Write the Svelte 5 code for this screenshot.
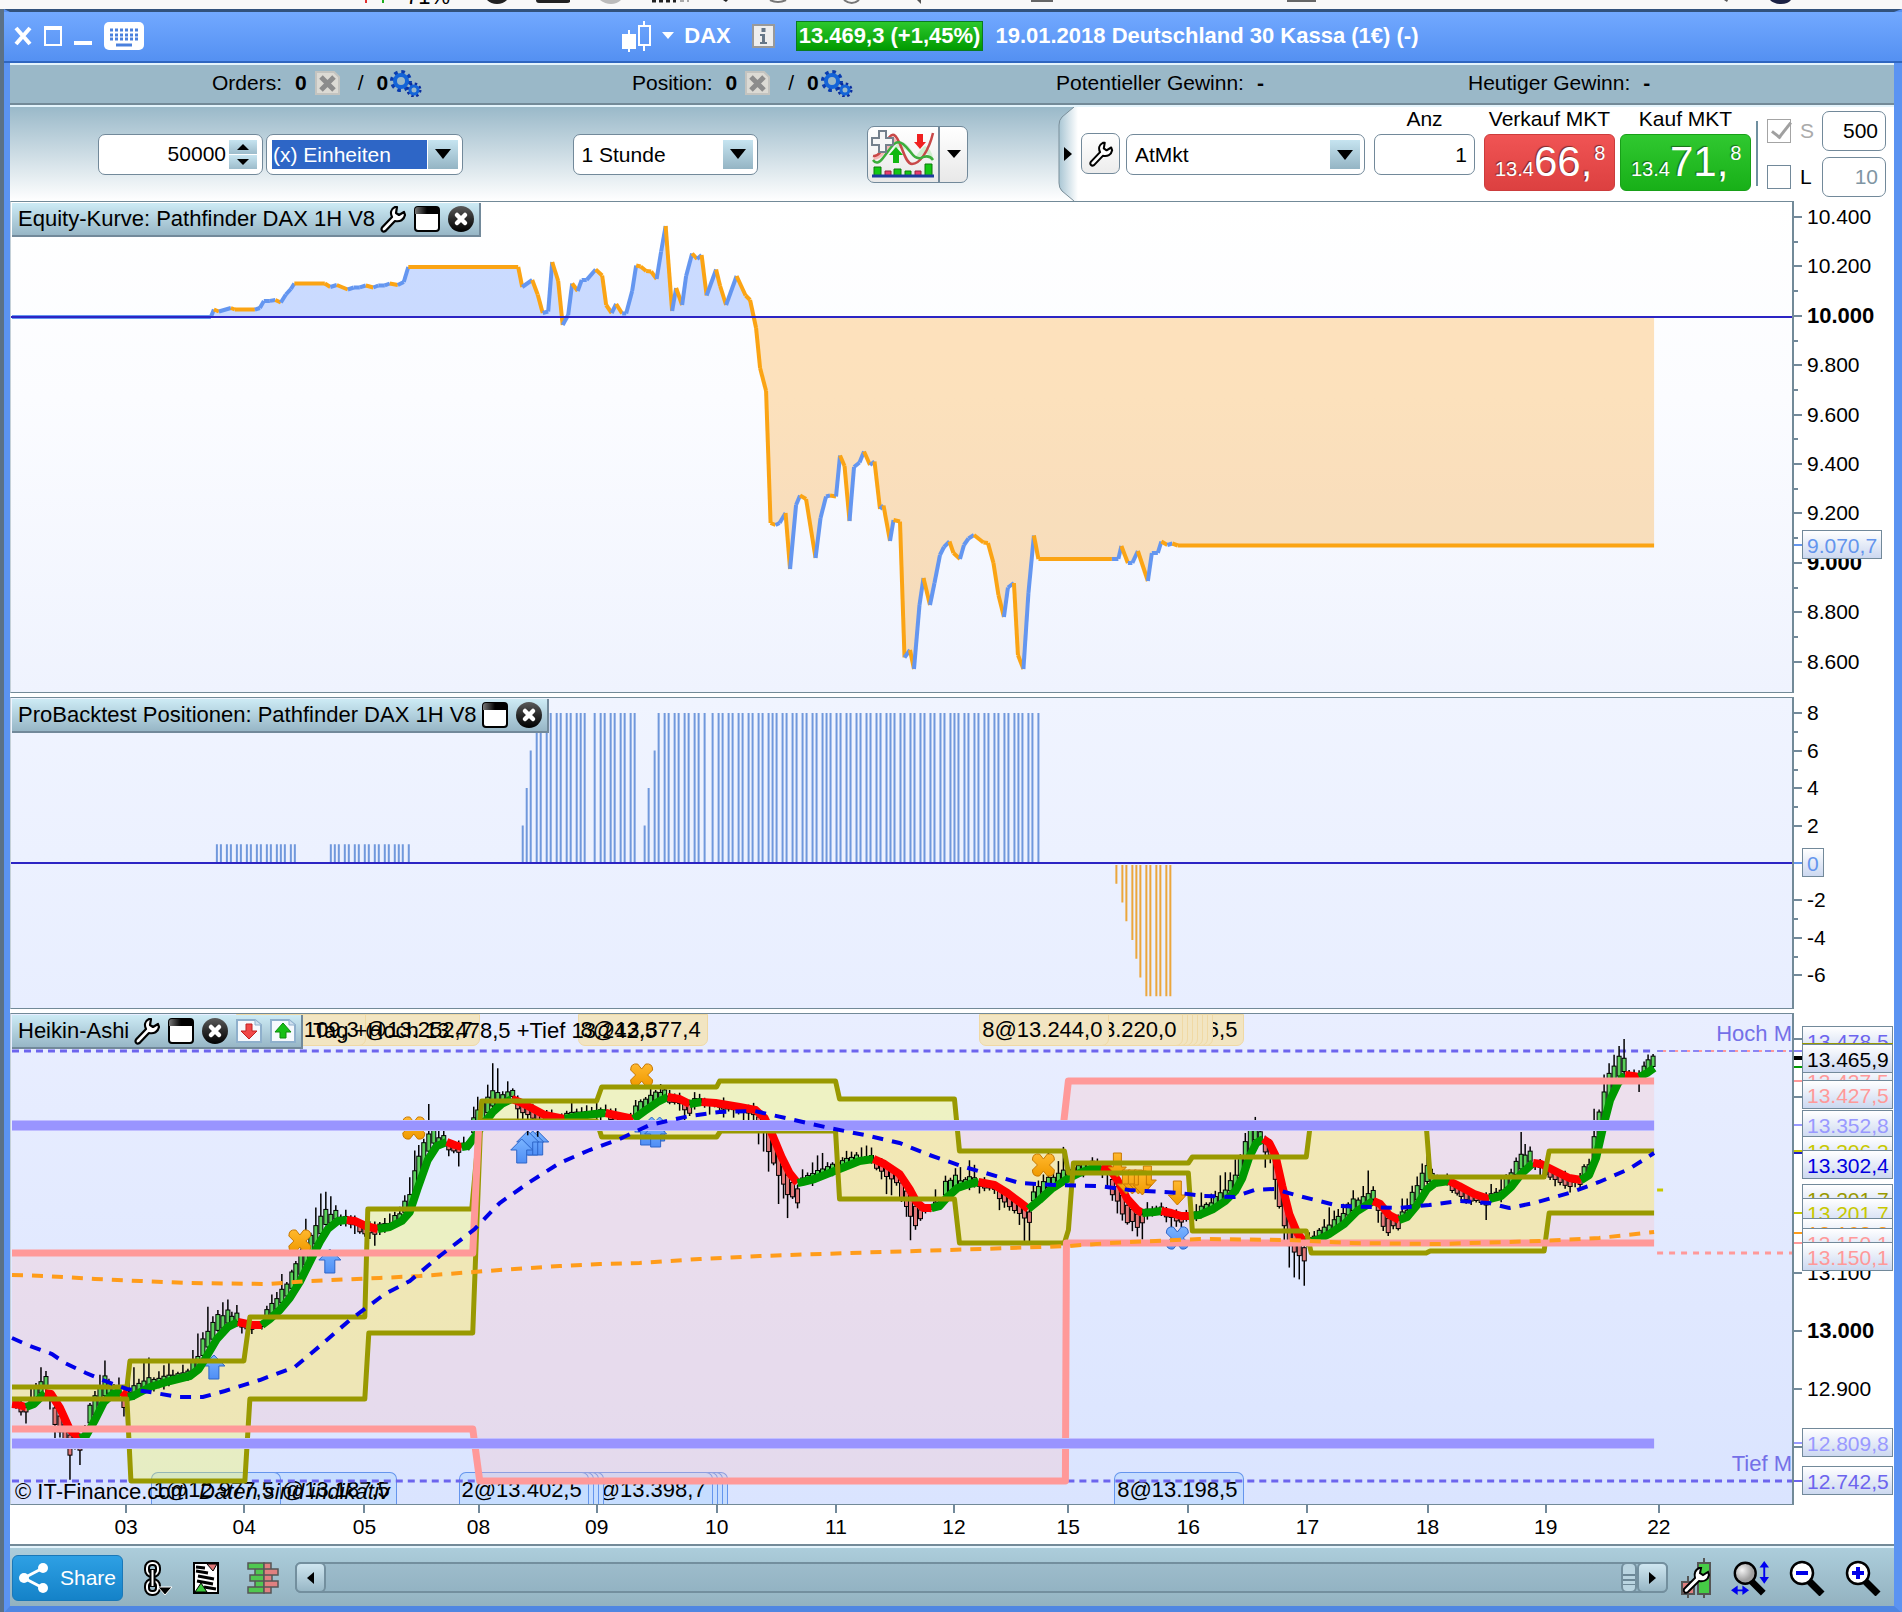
<script>
  // Einstellungen der Werkzeugleiste
  let units = $state(50000);
  let unitMode = $state('(x) Einheiten');
  let timeframe = $state('1 Stunde');
  let orderType = $state('AtMkt');
  let amount = $state(1);
  let stopOn = $state(true);
  let limitOn = $state(false);
  let stop = $state(500);
  let limit = $state(10);

  // Zeichenfläche: alle Kurven liegen im selben Koordinatensystem
  const X0 = 11;
  const W = 1782;
  const equityTop = 202;
  const positionTop = 698;
  const priceTop = 1014;

  const left = (x) => ((x - X0) / W) * 100 + '%';
  const pts = (list) => list.map((p) => p.join(',')).join(' ');

  // Kapitalkurve
  const equity = [
    [12,317],[211,317],[214,309.5],[219,311.5],[231,308],[235,309.5],[255,309.6],[260,308],[264,301],[270,300.9],
    [275.5,300],[281,302.5],[286,294.5],[291,289],[294.5,283.5],[325,283.5],[330.5,287],[337,285],[348,289.5],
    [354,287.5],[360,287.4],[366,285.5],[373.5,287.5],[378.5,285.5],[385,285.4],[390,283.5],[398,285],[404,282],
    [408.5,267],[518.5,267],[522.5,287],[532.5,280],[538,294.5],[543,313],[548.5,311.5],[552.5,262],[558.5,281],
    [563,325],[568.5,315],[572.5,283.5],[578,291],[582,280],[587,279.9],[596,269.5],[602.5,275.5],[606.5,305],
    [612,313],[616.5,304],[622.5,313.5],[626.5,313.4],[632.5,291],[636.5,265.5],[641,266.5],[646.5,271],
    [651.5,271.5],[657,279],[661.5,251.5],[666,226],[672.5,311],[676.5,288],[682.5,305],[686.5,276],[692.5,253.5],
    [697.5,259],[702,255],[707,295.5],[716.5,269.5],[720.5,286],[726.5,305],[737,276],[746,295.5],[750.5,300],
    [756.5,328],[760.5,368],[766.5,391],[771,523],[776,525],[780,523],[786,513],[790.5,569],[796.5,505],
    [800.5,495.5],[806.5,499],[816,558],[821,518],[826.5,496.5],[830.5,495.5],[836.5,496.5],[840.5,455.5],
    [845,466],[850,521],[854.5,467],[860,462.5],[864.5,451.5],[870.5,465],[875,461.5],[880.5,509],[884,505.5],
    [890.5,541],[894,520],[900.5,521.5],[905,657.5],[910.5,650],[914.5,669],[920,605],[924,578],[930.5,605],
    [935,583],[940.5,555],[944.5,547],[950,541.5],[954,553],[960.5,559],[964.5,545],[969,538.5],[974.5,535],
    [984,542.5],[988.5,543],[994,563],[999,595],[1004.5,617],[1008.5,587.5],[1014.5,583],[1018.5,655],
    [1024,669],[1029,593],[1034.5,535.5],[1039,559],[1112.5,559],[1119,558.9],[1122,546],[1128.5,563],
    [1133,562.9],[1138.5,551],[1148.5,581],[1152.5,553],[1158.5,552.9],[1162,541.5],[1168,545],[1173,543.5],
    [1178.5,545.5],[1655,545.5]
  ];
  const equityArea = pts([...equity, [1655, 317], [12, 317]]);
  const equityLines = equity.slice(1).map((p, i) => ({
    points: pts([equity[i], p]),
    up: i === 0 || p[1] < equity[i][1]
  }));

  // Positionsgröße pro Kerze
  const bars = [];
  const addBars = (from, to, size) => {
    for (let i = from; i <= to; i++) {
      if ([14, 24, 38].includes(i)) continue;
      bars.push({ x: Math.round((521 + 4.92 * i) / 2) * 2, v: size(i) });
    }
  };
  addBars(-62, -46, () => 1);
  addBars(-39, -23, () => 1);
  addBars(0, 23, (i) => Math.min(8, 2 + 2 * i));
  addBars(25, 105, (i) => Math.min(8, 2 + 2 * (i - 25)));
  addBars(121, 132, (i) => -Math.min(7, i - 120));

  // Geglätteter Kurs, steigend grün und fallend rot
  const trend = [
    [12,1404],[17,1404.5],[26,1407],[34,1404],[45,1393],[51,1394],[60,1408],[70,1430],[80,1438],[86,1436],[95,1420],
    [104,1402],[113,1394],[122,1392],[128,1397],[133,1396],[150,1387],[170,1381],[190,1376],[199,1369],[207,1356],
    [217,1339],[228,1327],[238,1322],[243,1323],[252,1325],[262,1325],[270,1319],[280,1310],[290,1298],[300,1282],
    [312,1258],[320,1242],[328,1229],[338,1221],[347,1220],[355,1221],[366,1226],[378,1229],[390,1227],[402,1221],
    [410,1212],[418,1188],[428,1160],[437,1146],[447,1142],[455,1145],[462,1147],[468,1146],[474,1138],[484,1124],
    [493,1112],[502,1104],[512,1099],[520,1102],[530,1107],[545,1115],[565,1119],[580,1116],[595,1114],[606,1113],
    [615,1115],[634,1119],[645,1111],[658,1102],[668,1097],[680,1099],[690,1104],[696,1103],[702,1102],[716,1103],
    [740,1107],[756,1110],[765,1118],[772,1133],[782,1157],[790,1173],[798,1183],[803,1182],[815,1179],[830,1173],
    [845,1167],[860,1161],[874,1159],[885,1164],[900,1174],[910,1189],[917,1202],[924,1208],[932,1208],[940,1206],
    [948,1197],[958,1188],[970,1184],[979,1182],[995,1185],[1008,1193],[1020,1202],[1029,1209],[1040,1200],
    [1052,1189],[1066,1180],[1080,1173],[1094,1168],[1102,1167],[1110,1169],[1118,1180],[1128,1199],[1138,1210],
    [1143,1213],[1155,1212],[1162,1211],[1172,1213],[1182,1216],[1190,1216],[1200,1215],[1214,1209],[1226,1201],
    [1236,1191],[1243,1178],[1250,1157],[1257,1143],[1264,1139],[1270,1143],[1276,1155],[1283,1186],[1290,1214],
    [1298,1233],[1306,1243],[1318,1240],[1330,1234],[1345,1224],[1358,1211],[1374,1201],[1381,1204],[1390,1215],
    [1400,1220],[1408,1217],[1418,1205],[1428,1189],[1436,1183],[1450,1181],[1460,1186],[1475,1194],[1490,1199],
    [1502,1196],[1512,1187],[1522,1174],[1534,1163],[1542,1164],[1556,1171],[1570,1178],[1582,1180],[1590,1175],
    [1597,1158],[1604,1127],[1611,1100],[1619,1083],[1626,1075],[1634,1076],[1640,1077],[1648,1073],[1655,1068]
  ];
  const trendLines = [];
  trend.slice(1).forEach((p, i) => {
    const up = p[1] < trend[i][1];
    const last = trendLines.at(-1);
    if (last && last.up === up) last.list.push(p);
    else trendLines.push({ up, list: [trend[i], p] });
  });

  const trendAt = (x) => {
    const i = Math.max(1, trend.findIndex((p) => p[0] >= x));
    const [a, b] = [trend[i - 1], trend[i]];
    return { y: a[1] + ((x - a[0]) / (b[0] - a[0])) * (b[1] - a[1]), k: (b[1] - a[1]) / (b[0] - a[0]) };
  };

  // Heikin-Ashi-Kerzen laufen dem geglätteten Kurs voraus
  const candles = [];
  for (let i = 0; i < 334; i++) {
    const x = 15 + i * 4.92;
    const { y, k } = trendAt(x);
    const r1 = Math.abs(Math.sin(i * 12.9898) * 43758.5453) % 1;
    const r2 = Math.abs(Math.sin(i * 78.233) * 12543.123) % 1;
    const lead = Math.max(-17, Math.min(17, k * 11));
    const body = 2 + Math.abs(k) * 8 + r1 * 3;
    const mid = y + lead;
    const up = k < 0;
    const wick = 2 + r2 * r2 * (6 + Math.min(22, Math.abs(k) * 26));
    candles.push({
      x: Math.round(x),
      top: mid - body / 2,
      body,
      high: mid - body / 2 - (up ? wick : 1 + r1 * 5),
      low: mid + body / 2 + (up ? 1 + r1 * 5 : wick),
      up
    });
  }

  // Tageshoch und Tagestief, Wochenhoch und Wochentief
  const dayHigh = [
    [12,1387],[127,1387],[130,1361],[244,1361],[250,1317],[365,1317],[368,1209],[472,1209],[482,1101],[597,1101],
    [602,1087],[717,1087],[720,1081],[836,1081],[840,1099],[955,1099],[960,1151],[1065,1151],[1069,1173],[1189,1173],
    [1193,1231],[1307,1231],[1312,1253],[1427,1253],[1431,1251],[1545,1251],[1550,1213],[1655,1213]
  ];
  const dayLow = [
    [12,1399],[127,1399],[131,1481],[245,1481],[250,1399],[365,1399],[369,1333],[473,1333],[481,1121],[597,1121],
    [602,1137],[717,1137],[721,1131],[836,1131],[840,1199],[955,1199],[960,1243],[1065,1243],[1069,1230],[1074,1163],
    [1189,1163],[1193,1157],[1307,1157],[1311,1125],[1427,1125],[1431,1177],[1545,1177],[1550,1151],[1655,1151]
  ];
  const weekHigh = [[12,1253],[473,1253],[479,1125],[1064,1125],[1069,1081],[1655,1081]];
  const weekLow = [[12,1429],[473,1429],[480,1481],[1066,1481],[1067,1243],[1655,1243]];
  const dayArea = pts([...dayHigh, ...dayLow.slice().reverse()]);
  const weekArea = pts([...weekHigh, ...weekLow.slice().reverse()]);

  const averageBlue = pts([
    [12,1338],[30,1346],[52,1354],[65,1363],[86,1373],[105,1381],[127,1389],[150,1392],[178,1397],[203,1397],
    [225,1391],[260,1380],[295,1367],[320,1346],[350,1320],[385,1294],[410,1281],[440,1256],[475,1229],[500,1203],
    [530,1182],[560,1163],[590,1150],[620,1139],[650,1125],[690,1116],[720,1112],[755,1111],[790,1119],[830,1128],
    [870,1136],[900,1143],[930,1155],[965,1167],[1000,1177],[1020,1183],[1055,1185],[1100,1186],[1130,1190],
    [1180,1193],[1205,1196],[1235,1197],[1255,1190],[1275,1189],[1300,1196],[1340,1206],[1400,1208],[1430,1205],
    [1460,1201],[1490,1203],[1510,1208],[1535,1203],[1570,1193],[1600,1182],[1630,1169],[1655,1153]
  ]);
  const averageOrange = pts([
    [12,1275],[45,1276],[95,1279],[140,1281],[190,1283],[270,1284],[310,1281],[380,1278],[420,1276],[500,1270],
    [560,1266],[600,1264],[640,1263],[700,1259],[760,1256],[850,1253],[950,1250],[1010,1248],[1070,1246],
    [1110,1243],[1200,1239],[1290,1240],[1350,1243],[1440,1244],[1540,1241],[1600,1238],[1655,1232]
  ]);

  const exits = [[300,1241],[414,1128],[642,1075],[1044,1165]];
  const buys = [[214,1367],[330,1261],[538,1143],[533,1143],[528,1143],[522,1151],[660,1129],[652,1129],[646,1133],[656,1135]];
  const sells = [[1118,1165],[1148,1178],[1127,1182],[1133,1182],[1139,1182],[1143,1183],[1178,1193]];

  // Order-Etiketten, die linken überdecken die rechten
  const topChips = [
    [1115,'6,5'],[1084,''],[1079,''],[1074,''],[1069,''],[1064,''],[1059,''],
    [1054,'3.220,0'],[980,'8@13.244,0'],[578,'8@13.377,4'],[350,'@13.252,7'],[236,'109,3']
  ];
  const bottomChips = [
    [1115,'8@13.198,5'],[598,''],[593,''],[588,''],[583,'@13.398,7'],[474,''],
    [469,''],[464,''],[459,'2@13.402,5'],[267,'@13.187,5'],[151,'1@12.977,5']
  ];

  // Achsen
  const equityScale = [10400, 10200, 10000, 9800, 9600, 9400, 9200, 9000, 8800, 8600].map((v) => ({
    text: v.toLocaleString('de-DE').replace(/^(\d)(\d{3})$/, '$1.$2'),
    y: 217 + (10400 - v) * 0.247 - equityTop,
    bold: v % 1000 === 0
  }));
  const positionScale = [8, 6, 4, 2, -2, -4, -6].map((v) => ({ text: v, y: 863 - v * 18.7 - positionTop }));
  const priceScale = [
    { text: '', y: 25 }, { text: '', y: 83 }, { text: '13.100', y: 259 },
    { text: '13.000', y: 317, bold: true }, { text: '12.900', y: 375 }, { text: '', y: 433 }
  ];
  const priceTags = [
    ['13.478,5', 1027, '#6c64ee'], ['', 1044, '#999900'], ['13.427,5', 1067, '#ff9999'], ['13.427,5', 1081, '#ff9999'],
    ['13.465,9', 1045, '#000000'], ['13.352,8', 1111, '#9999ff'], ['13.306,3', 1137, '#c8c800'], ['13.302,4', 1151, '#0000e0'],
    ['13.201,7', 1185, '#999900'], ['13.201,7', 1199, '#c8c800'], ['13.168,3', 1219, '#ff9c1a'], ['13.150,1', 1229, '#ff9999'],
    ['13.150,1', 1243, '#ff9999'], ['12.809,8', 1429, '#9999ff'], ['12.742,5', 1467, '#6c64ee']
  ];
  const priceMarks = [
    [1051, '#8a84f4'], [1057, '#000000'], [1059, '#000000'], [1067, '#009900'], [1081, '#ff9999'], [1125, '#9999ff'],
    [1151, '#c8c800'], [1153, '#2020c0'], [1213, '#c8c800'], [1233, '#ff9c1a'], [1243, '#ff9999'], [1443, '#9999ff'], [1481, '#6c64ee']
  ];
  const days = [
    ['03', 127], ['04', 245], ['05', 365], ['08', 479], ['09', 597], ['10', 717], ['11', 836], ['12', 954],
    ['15', 1068], ['16', 1188], ['17', 1307], ['18', 1427], ['19', 1545], ['22', 1658]
  ];
</script>

{#snippet wrench(w = 26, h = 28)}
  <svg width={w} height={h} viewBox="0 0 26 28" aria-hidden="true">
    <path d="M15 2C11 4 10 8 12 12L2 22.500c-1.500 3 1 5 3.500 3.500L15 16c5 1 9-1 10-6l-1-3-5 3-3-2 1-6z" fill="#fff" stroke="#000" stroke-width="2.200" stroke-linejoin="round" />
  </svg>
{/snippet}

{#snippet closeIcon()}
  <svg width="26" height="26" viewBox="0 0 26 26" aria-hidden="true">
    <circle cx="13" cy="13" r="13" fill="url(#ball)" />
    <path d="M9 9l8 8M17 9l-8 8" stroke="#fff" stroke-width="4.500" stroke-linecap="round" />
  </svg>
{/snippet}

{#snippet windowIcon()}
  <svg width="26" height="26" viewBox="0 0 26 26" aria-hidden="true">
    <rect x="1" y="1" width="24" height="24" rx="3" fill="#fff" stroke="#000" stroke-width="2" />
    <path d="M1 8V4q0-3 3-3h18q3 0 3 3v4z" fill="url(#cap)" />
  </svg>
{/snippet}

{#snippet docArrow(up)}
  <svg width="26" height="24" viewBox="0 0 26 24" aria-hidden="true">
    <path d="M1 1h18l6 5v17H1z" fill="#f6f9fd" stroke="#8fb0cc" stroke-width="2" />
    <path d="M19 1v5h6" fill="#cfe0ef" stroke="#8fb0cc" />
    {#if up}
      <path d="M13 4l8 9h-5v6h-6v-6H5z" fill="#16c016" stroke="#0a8a0a" />
    {:else}
      <path d="M13 20l8-8h-5V5h-6v7H5z" fill="#f04848" stroke="#c02020" />
    {/if}
  </svg>
{/snippet}

{#snippet gears()}
  <svg width="32" height="27" viewBox="0 0 32 27" aria-hidden="true">
    <circle cx="11" cy="11" r="9" fill="none" stroke="#0a3cae" stroke-width="4" stroke-dasharray="3.500 3.570" />
    <circle cx="11" cy="11" r="6" fill="none" stroke="#1464d8" stroke-width="4" />
    <circle cx="24" cy="20" r="6" fill="none" stroke="#0a2c9e" stroke-width="3" stroke-dasharray="2.360 2.350" />
    <circle cx="24" cy="20" r="4" fill="none" stroke="#1464d8" stroke-width="3" />
  </svg>
{/snippet}

{#snippet crossDoc()}
  <svg width="25" height="24" viewBox="0 0 25 24" aria-hidden="true">
    <path d="M1 1h18l5 5v17H1z" fill="#dcdad4" stroke="#c4c4c0" stroke-width="2" />
    <path d="M6 6l13 13M19 6L6 19" stroke="#8c8c8c" stroke-width="5" />
  </svg>
{/snippet}

{#snippet arrow(size = 10)}
  <svg class="arrow" width={size + 6} height={size} viewBox="0 0 16 10" preserveAspectRatio="none" aria-hidden="true"><path d="M0 0h16L8 10z" /></svg>
{/snippet}

{#snippet magnifier(sign)}
  <svg width="36" height="36" viewBox="0 0 36 36" aria-hidden="true">
    <path d="M19 20l14 14" stroke="#000" stroke-width="7" />
    <circle cx="13" cy="13" r="11" fill="#fff" stroke="#000" stroke-width="2.500" />
    <path d={sign === '+' ? 'M7 13h12M13 7v12' : 'M7 13h12'} stroke="#0000e8" stroke-width="4" />
  </svg>
{/snippet}

{#snippet scale(list)}
  {#each list as s, i}
    <i class="tick" style:top="{s.y}px"></i>
    {#if i < list.length - 1 && list !== priceScale}
      <i class="tick minor" style:top="{s.y + (list[i + 1].y - s.y) / 2}px"></i>
    {/if}
    <span class="value" class:bold={s.bold} style:top="{s.y}px">{s.text}</span>
  {/each}
{/snippet}

<svg class="defs" width="0" height="0" aria-hidden="true">
  <defs>
    <linearGradient id="ball" x2="0" y2="1"><stop offset="0" stop-color="#5a5a5a" /><stop offset=".5" stop-color="#2a2a2a" /><stop offset="1" stop-color="#000" /></linearGradient>
    <linearGradient id="cap"><stop offset="0" stop-color="#777" /><stop offset=".5" stop-color="#000" /></linearGradient>
    <radialGradient id="lens" cx=".35" cy=".35"><stop offset="0" stop-color="#f4f4f4" /><stop offset="1" stop-color="#a0a0a0" /></radialGradient>
    <linearGradient id="gold" x2="0" y2="1"><stop offset="0" stop-color="#ffb82e" /><stop offset="1" stop-color="#f09a00" /></linearGradient>
    <linearGradient id="sky" x2="0" y2="1"><stop offset="0" stop-color="#7ab4ff" /><stop offset="1" stop-color="#4f8ef5" /></linearGradient>
  </defs>
</svg>

<div class="desktop">
  <div class="menubar" aria-hidden="true">
    <span>71%</span>
    <svg width="1902" height="9" viewBox="0 0 1902 9">
      <path d="M366 0v3" stroke="#e03030" stroke-width="2" /><path d="M383 0v3" stroke="#20b020" stroke-width="2" />
      <path d="M487 0h20q-4 4-10 4t-10-4M536 0h34v2q-1 1-3 1h-28q-3 0-3-3" fill="#222" />
      <path d="M600 0h21q-4 4-10 4t-11-4" fill="#bbb" />
      <path d="M652 1h24" stroke="#222" stroke-width="3" stroke-dasharray="4 3" /><path d="M680 1h9" stroke="#aaa" stroke-width="2" stroke-dasharray="4 3" />
      <path d="M723 0h5l-2 2z" fill="#222" />
      <path d="M770 0q8 4 16 0M844 0q8 6 15 0" fill="none" stroke="#777" stroke-width="2" />
      <path d="M921 0v4l-4-4" fill="#555" /><path d="M1031 1h22M1287 1h29" stroke="#666" stroke-width="2" />
      <path d="M1724 0h4l-1 2z" fill="#555" /><path d="M1770 0h21q-3 4-10 4t-11-4" fill="#1c2244" />
    </svg>
  </div>

  <div class="window">
    <header class="titlebar">
      <div class="winbuttons">
        <button class="bare" aria-label="Schließen"><svg width="18" height="20" viewBox="0 0 18 20"><path d="M2 2l14 16M16 2L2 18" stroke="#fff" stroke-width="4" /></svg></button>
        <button class="bare" aria-label="Maximieren"><svg width="18" height="20" viewBox="0 0 18 20"><path d="M1 1h16v18H1zM1 3h16" fill="none" stroke="#fff" stroke-width="2" /></svg></button>
        <button class="bare" aria-label="Minimieren"><svg width="18" height="20" viewBox="0 0 18 20"><path d="M0 17h18" stroke="#fff" stroke-width="4" /></svg></button>
        <button class="bare" aria-label="Tastatur"><svg width="40" height="28" viewBox="0 0 40 28"><rect width="40" height="28" rx="5" fill="#fff" /><path d="M6 8h28M6 13h28M6 17h28" stroke="#4a80dd" stroke-width="3" stroke-dasharray="3 2" /><path d="M12 23h16" stroke="#4a80dd" stroke-width="3" /></svg></button>
      </div>
      <div class="instrument">
        <button class="bare candle" aria-label="Instrument wählen">
          <svg width="30" height="32" viewBox="0 0 30 32"><path d="M0 14h14v15H0zM6 10h2v22H6z" fill="#fff" /><path d="M17 6h11v19H17zM22 1v5M22 25v6" fill="none" stroke="#fff" stroke-width="2" /></svg>
          <svg width="12" height="7" viewBox="0 0 12 7"><path d="M0 0h12L6 7z" fill="#fff" /></svg>
        </button>
        <span>DAX</span>
        <button class="bare info" aria-label="Info"><svg width="23" height="24" viewBox="0 0 23 24"><rect x="1" y="1" width="21" height="22" fill="#eee" stroke="#999" stroke-width="2" /><path d="M9 10h4v8h2v2H8v-2h2v-6H8v-2zM9.500 4h4v4h-4z" fill="#667788" /></svg></button>
        <span class="quote">13.469,3 (+1,45%)</span>
        <span>19.01.2018 Deutschland 30 Kassa (1€) (-)</span>
      </div>
    </header>

    <div class="infobar">
      <div>Orders: <b>0</b> <button class="bare" aria-label="Orders löschen">{@render crossDoc()}</button> <span class="slash">/</span> <b>0</b><button class="bare" aria-label="Strategien">{@render gears()}</button></div>
      <div>Position: <b>0</b> <button class="bare" aria-label="Position schließen">{@render crossDoc()}</button> <span class="slash">/</span> <b>0</b><button class="bare" aria-label="Strategien der Position">{@render gears()}</button></div>
      <div>Potentieller Gewinn: <b>-</b></div>
      <div>Heutiger Gewinn: <b>-</b></div>
    </div>

    <div class="toolbar">
      <div class="settings">
        <div class="pair">
          <div class="field spin">
            <input aria-label="Anzahl Einheiten" bind:value={units} />
            <div class="steps">
              <button aria-label="Mehr" onclick={() => units++}><svg width="12" height="6" viewBox="0 0 12 6"><path d="M0 6h12L6 0z" /></svg></button>
              <button aria-label="Weniger" onclick={() => units--}><svg width="12" height="6" viewBox="0 0 12 6"><path d="M0 0h12L6 6z" /></svg></button>
            </div>
          </div>
          <div class="field combo marked">
            <select aria-label="Einheit" bind:value={unitMode}><option>(x) Einheiten</option></select>
            <span class="drop">{@render arrow()}</span>
          </div>
        </div>
        <div class="field combo hour">
          <select aria-label="Zeiteinheit" bind:value={timeframe}><option>1 Stunde</option></select>
          <span class="drop">{@render arrow()}</span>
        </div>
        <div class="indicator">
          <button aria-label="Indikator hinzufügen">
            <svg width="64" height="48" viewBox="0 0 64 48">
              <path d="M2 30C5 20 12 22 16 14L22 6q6 6 10 14l-8-8C14 20 12 30 2 30" fill="#f6b6b6" />
              <path d="M22 20q6-12 13-6t9 14q6-10 10-12 6 2 8 12-8-8-12-2-4 6-8 0-10-12-20-6" fill="#cfeecf" />
              <path d="M2 26C12 28 16 2 23 5s10 29 18 29S58 20 62 3" fill="none" stroke="#c84848" stroke-width="2.500" />
              <path d="M2 30q4 6 10-2c8-10 12-20 20-14s10 16 18 14q8-4 12 2" fill="none" stroke="#3cae3c" stroke-width="2.500" />
              <path d="M8 1h7v7h7v7h-7v7H8v-7H1V8h7z" fill="#f6f6f6" stroke="#74808c" stroke-width="2" />
              <path d="M46 4h6v8h3l-6 7-6-7h3z" fill="#f02020" /><path d="M22 33v-8h-4l7-8 7 8h-4v8z" fill="#10b810" />
              <path d="M3 46V37h7v9M23 46v-7h7v7M34 46v-5h6v5M54 46V34h7v12" fill="#14c814" stroke="#0a7a0a" />
              <path d="M14 46v-5h6v5M44 46v-5h6v5" fill="#e83c6c" stroke="#902040" /><path d="M1 46h62" stroke="#1c3c9c" stroke-width="3" />
            </svg>
          </button>
          <button class="more" aria-label="Weitere Indikatoren">{@render arrow(8)}</button>
        </div>
      </div>

      <div class="trade">
        <svg class="flap" width="20" height="94" viewBox="0 0 20 94" aria-hidden="true">
          <defs><linearGradient id="fold"><stop offset="0" stop-color="#a9c6d4" /><stop offset="1" stop-color="#fff" /></linearGradient></defs>
          <path d="M16 0L4 10Q1 13 1 18v58q0 5 3 8l12 10h4V0z" fill="url(#fold)" />
          <path d="M16 0L4 10Q1 13 1 18v58q0 5 3 8l12 10" fill="none" stroke="#7b8f9a" />
          <path d="M6 40v14l8-7z" />
        </svg>
        <button class="tool" aria-label="Order-Einstellungen">{@render wrench(26, 26)}</button>
        <div class="field combo order">
          <select aria-label="Orderart" bind:value={orderType}><option>AtMkt</option></select>
          <span class="drop">{@render arrow()}</span>
        </div>
        <div class="column count">
          <label for="anz">Anz</label>
          <input class="field" id="anz" bind:value={amount} />
        </div>
        <div class="column">
          <span>Verkauf MKT</span>
          <button class="deal sell"><small>13.4</small><strong>66,</strong><sup>8</sup></button>
        </div>
        <div class="column">
          <span>Kauf MKT</span>
          <button class="deal buy"><small>13.4</small><strong>71,</strong><sup>8</sup></button>
        </div>
        <div class="protect">
          <div>
            <input type="checkbox" id="stop-on" bind:checked={stopOn} disabled />
            <label class="grey" for="stop-on">S</label>
            <input class="field" aria-label="Stop-Abstand" bind:value={stop} />
          </div>
          <div>
            <input type="checkbox" id="limit-on" bind:checked={limitOn} />
            <label for="limit-on">L</label>
            <input class="field pale" aria-label="Limit-Abstand" bind:value={limit} />
          </div>
        </div>
      </div>
    </div>

    <main>
      <section class="panel tall">
        <div class="plot equity">
          <svg class="chart" viewBox="11 202 1782 490" preserveAspectRatio="none" role="img" aria-label="Equity-Kurve">
            <defs>
              <clipPath id="above"><rect x="0" y="200" width="1800" height="117" /></clipPath>
              <clipPath id="below"><rect x="600" y="317" width="1200" height="400" /></clipPath>
            </defs>
            <polygon points={equityArea} fill="#6495ff" fill-opacity=".33" clip-path="url(#above)" />
            <polygon points={equityArea} fill="#ff9c10" fill-opacity=".28" clip-path="url(#below)" />
            {#each equityLines as line}
              <polyline points={line.points} stroke={line.up ? '#6496f0' : '#fba414'} stroke-width="4" fill="none" />
            {/each}
            <path d="M11 317h1782" stroke="#2c24c4" stroke-width="2" />
          </svg>
          <div class="tab"><span>Equity-Kurve: Pathfinder DAX 1H V8</span>
            <button class="bare" aria-label="Einstellungen Equity">{@render wrench()}</button>
            <button class="bare" aria-label="Fenster Equity">{@render windowIcon()}</button>
            <button class="bare" aria-label="Equity schließen">{@render closeIcon()}</button>
          </div>
        </div>
        <div class="axis">
          {@render scale(equityScale)}
          <i class="tick" style:top="{545 - equityTop}px" style:background="#6495ed"></i>
          <span class="tag" style:top="{531 - equityTop}px" style:color="#6495ed">9.070,7</span>
        </div>
      </section>

      <section class="panel short">
        <div class="plot positions">
          <svg class="chart" viewBox="11 698 1782 310" preserveAspectRatio="none" role="img" aria-label="Positionen">
            {#each bars as b}
              <rect x={b.x} y={b.v > 0 ? 863 - b.v * 18.75 : 865} width="2" height={Math.abs(b.v) * 18.75} fill={b.v > 0 ? '#7098dc' : '#eba63c'} />
            {/each}
            <path d="M11 863h1782" stroke="#2c24c4" stroke-width="2" />
          </svg>
          <div class="tab"><span>ProBacktest Positionen: Pathfinder DAX 1H V8</span>
            <button class="bare" aria-label="Fenster Positionen">{@render windowIcon()}</button>
            <button class="bare" aria-label="Positionen schließen">{@render closeIcon()}</button>
          </div>
        </div>
        <div class="axis">
          {@render scale(positionScale)}
          <i class="tick" style:top="{863 - positionTop}px" style:background="#6495ed"></i>
          <span class="tag" style:top="{849 - positionTop}px" style:color="#6495ed">0</span>
        </div>
      </section>

      <section class="panel tall">
        <div class="plot price">
          {#each bottomChips as [x, text]}
            <span class="chip low" style:left={left(x)}>{text}</span>
          {/each}
          <svg class="chart" viewBox="11 1014 1782 490" preserveAspectRatio="none" role="img" aria-label="Heikin-Ashi DAX">
            <polygon points={weekArea} fill="#ffbebe" fill-opacity=".27" />
            <polygon points={dayArea} fill="#ffff3c" fill-opacity=".31" />
            <path d="M12 1051H1655M12 1481H1793" stroke="#6c64ee" stroke-width="3" stroke-dasharray="7 5" />
            <path d="M1658 1051H1793" stroke="#8a84f4" stroke-width="2" stroke-dasharray="6 6" />
            <path d="M1664 1051H1793" stroke="#ff9999" stroke-width="2" stroke-dasharray="3 9" />
            <path d="M1658 1253H1793" stroke="#ff9999" stroke-width="3" stroke-dasharray="6 6" />
            <path d="M1658 1190h6" stroke="#c8c800" stroke-width="3" />
            {#each buys as [x, y]}
              <path d="M0-12l11 11H5v13H-5V-1h-6z" transform="translate({x} {y})" fill="url(#sky)" stroke="#2c64c8" />
            {/each}
            {#each candles as c}
              <path d="M{c.x + 1} {c.high}V{c.low}" stroke="#000" stroke-width="1.500" />
              <rect x={c.x - 1} y={c.top} width="4" height={c.body} fill={c.up ? '#5ad05a' : '#e07878'} stroke="#000" />
            {/each}
            {#each trendLines as line}
              <polyline points={pts(line.list)} stroke={line.up ? '#009900' : '#ff0000'} stroke-width="8" stroke-linejoin="round" fill="none" />
            {/each}
            <path d="M0-6l4-5q7-1 7 6l-5 5 5 5q0 7-7 6l-4-5-4 5q-7 1-7-6l5-5-5-5q0-7 7-6z" transform="translate(1178 1238)" fill="url(#sky)" stroke="#2c64c8" />
            {#each exits as [x, y]}
              <path d="M0-6l4-5q7-1 7 6l-5 5 5 5q0 7-7 6l-4-5-4 5q-7 1-7-6l5-5-5-5q0-7 7-6z" transform="translate({x} {y})" fill="url(#gold)" stroke="#c87800" />
            {/each}
            {#each sells as [x, y]}
              <path d="M0 12l9-10H4v-14h-8V2h-5z" transform="translate({x} {y})" fill="url(#gold)" stroke="#c87800" />
            {/each}
            <g fill="none" stroke="#999900" stroke-width="5" stroke-linejoin="round">
              <polyline points={pts(dayHigh)} /><polyline points={pts(dayLow)} />
            </g>
            <g fill="none" stroke="#ff9999" stroke-width="7" stroke-linejoin="round">
              <polyline points={pts(weekHigh)} /><polyline points={pts(weekLow)} />
            </g>
            <path d="M12 1125.500H1655M12 1443.500H1655" stroke="#c0beff" stroke-width="11" />
            <path d="M12 1125.500H1655M12 1443.500H1655" stroke="#9994ff" stroke-width="9" />
            <polyline points={averageOrange} fill="none" stroke="#ff9c1a" stroke-width="4" stroke-dasharray="11 9" />
            <polyline points={averageBlue} fill="none" stroke="#0000e8" stroke-width="4" stroke-dasharray="11 9" />
          </svg>
          {#each topChips as [x, text]}
            <span class="chip" style:left={left(x)}>{text}</span>
          {/each}
          <span class="note range">Tag +Hoch 13.478,5 +Tief 13.242,5</span>
          <span class="note month">Hoch M</span>
          <span class="note month low">Tief M</span>
          <span class="note source">© IT-Finance.com <em>Daten sind indikativ</em></span>
          <div class="tab"><span>Heikin-Ashi</span>
            <button class="bare" aria-label="Einstellungen Kurs">{@render wrench()}</button>
            <button class="bare" aria-label="Fenster Kurs">{@render windowIcon()}</button>
            <button class="bare" aria-label="Kurs schließen">{@render closeIcon()}</button>
            <button class="bare" aria-label="Nach unten">{@render docArrow(false)}</button>
            <button class="bare" aria-label="Nach oben">{@render docArrow(true)}</button>
          </div>
        </div>
        <div class="axis">
          {@render scale(priceScale)}
          {#each priceMarks as [y, color]}
            <i class="tick" style:top="{y - priceTop}px" style:background={color}></i>
          {/each}
          {#each priceTags as [text, y, color]}
            <span class="tag wide" class:empty={!text} style:top="{y - priceTop}px" style:color={color}>{text}</span>
          {/each}
        </div>
      </section>

      <div class="timeline">
        <div class="days">
          {#each days as [text, x]}
            <span style:left={left(x)}>{text}</span>
          {/each}
        </div>
      </div>
    </main>

    <footer>
      <button class="share">
        <svg width="30" height="30" viewBox="0 0 30 30" aria-hidden="true"><path d="M24 5L5 15l19 10" fill="none" stroke="#fff" stroke-width="3" /><circle cx="5" cy="15" r="5" fill="#fff" /><circle cx="24" cy="5" r="5" fill="#fff" /><circle cx="24" cy="25" r="5" fill="#fff" /></svg>
        Share
      </button>
      <button class="bare" aria-label="Verknüpfen">
        <svg width="30" height="36" viewBox="0 0 30 36">
          <g fill="none" stroke="#000" stroke-width="6"><rect x="4" y="3" width="11" height="12" rx="5" /><rect x="4" y="21" width="11" height="12" rx="5" /></g>
          <g fill="none" stroke="#fff" stroke-width="2"><rect x="4" y="3" width="11" height="12" rx="5" /><rect x="4" y="21" width="11" height="12" rx="5" /></g>
          <path d="M9.500 9v18" stroke="#000" stroke-width="6" /><path d="M9.500 10v16" stroke="#fff" stroke-width="2" />
          <path d="M15 27h14l-7 8z" stroke="#fff" />
        </svg>
      </button>
      <button class="bare" aria-label="Nachrichten">
        <svg width="26" height="32" viewBox="0 0 26 32"><rect x="1" y="1" width="24" height="30" fill="#fff" stroke="#000" stroke-width="2" /><path d="M3 5l9 1M3 9l12 2M5 14l16 3M4 19l16 3M11 25l12 2" stroke="#000" stroke-width="3" /><path d="M14 2h10l-4 7z" fill="#e07878" stroke="#000" /><path d="M2 30h12l-6-9z" fill="#3cc83c" stroke="#000" /></svg>
      </button>
      <button class="bare book" aria-label="Orderbuch">
        <svg width="32" height="32" viewBox="0 0 32 32"><g stroke="#555" stroke-width="1.500"><path d="M1 1h16v6H1zM8 7h9v6H8zM3 13h14v6H3zM8 19h9v6H8zM1 25h16v6H1z" fill="#50c850" /><path d="M17 1h7v6h-7zM17 7h14v6H17zM17 13h8v6h-8zM17 19h14v6H17zM17 25h7v6h-7z" fill="#e08080" /></g></svg>
      </button>
      <div class="scroll">
        <button aria-label="Nach links scrollen"><svg width="7" height="12" viewBox="0 0 7 12"><path d="M7 0v12L0 6z" /></svg></button>
        <span class="thumb"></span>
        <button aria-label="Nach rechts scrollen"><svg width="7" height="12" viewBox="0 0 7 12"><path d="M0 0v12l7-6z" /></svg></button>
      </div>
      <button class="bare" aria-label="Chart-Einstellungen">
        <svg width="30" height="40" viewBox="0 0 30 40"><g stroke="#555" stroke-width="2"><path d="M7 18v22M23 0v40" /><path d="M1 24h12v12H1z" fill="#e08080" /><path d="M17 5h12v31H17z" fill="#46cc46" /></g><path d="M18 10c-4 2-5 6-4 10L3 31c-1 3 1 5 4 3l11-11c5 1 9-1 10-6l-1-3-5 3-3-2 1-5z" fill="#fff" stroke="#000" stroke-width="2" /></svg>
      </button>
      <button class="bare" aria-label="Zoom anpassen">
        <svg width="38" height="36" viewBox="0 0 40 36"><path d="M20 20l14 14" stroke="#000" stroke-width="7" /><circle cx="15" cy="13" r="11" fill="url(#lens)" stroke="#000" stroke-width="2.500" /><path d="M35 4v16M5 31h10" stroke="#0000f0" stroke-width="2" /><path d="M35 0l5 7H30zM35 24l5-7H30zM0 31l7-5v10zM19 31l-7-5v10z" fill="#0000f0" /></svg>
      </button>
      <button class="bare" aria-label="Verkleinern">{@render magnifier('-')}</button>
      <button class="bare" aria-label="Vergrößern">{@render magnifier('+')}</button>
    </footer>
  </div>
</div>

<style>
  :global(body) {
    background: #5b7187;
    font-family: "Liberation Sans", Arial, sans-serif;
    font-size: 21px;
    color: #000;
  }

  * {
    box-sizing: border-box;
  }

  button, input, select {
    font: inherit;
    color: inherit;
    margin: 0;
  }

  button {
    display: flex;
    align-items: center;
    justify-content: center;
    cursor: pointer;
  }

  .bare {
    background: none;
    border: 0;
    padding: 0;
  }

  .defs {
    position: absolute;
  }

  svg {
    display: block;
    flex: none;
  }

  .desktop {
    overflow: hidden;
  }

  .menubar {
    position: relative;
    height: 9px;
    background: #f8f8f8;
    overflow: hidden;
  }

  .menubar span {
    position: absolute;
    left: 406px;
    bottom: 2px;
    line-height: 20px;
    font-size: 22px;
  }

  .window {
    border-style: solid;
    border-width: 3px 8px 7px 6px;
    border-color: #32527c #5b93f2 #4f86e2;
    margin-left: 4px;
  }

  .titlebar {
    display: grid;
    grid-template-columns: 612fr 1271fr;
    align-items: center;
    height: 51px;
    margin: 0 -8px 0 -6px;
    padding: 0 8px 2px 6px;
    background: linear-gradient(#72a9ff, #5490f2);
    border-bottom: 2px solid #2f66c0;
    color: #fff;
    font-size: 22px;
    font-weight: bold;
  }

  .winbuttons {
    display: flex;
    align-items: center;
    gap: 12px;
    padding-left: 4px;
  }

  .instrument {
    display: flex;
    align-items: center;
    white-space: nowrap;
    gap: 10px;
  }

  .candle {
    gap: 10px;
  }

  .info {
    margin: 0 11px;
  }

  .quote {
    background: linear-gradient(#2cc82c, #009a00);
    border: 1px solid #0a7a20;
    padding: 0 2px;
    margin-right: 2px;
    line-height: 28px;
  }

  .infobar {
    display: grid;
    grid-template-columns: 420fr 424fr 412fr 426fr;
    height: 42px;
    padding: 0 0 2px 202px;
    background: #9ab8c8;
    border-top: 2px solid #e4f4fc;
    border-bottom: 2px solid #738a98;
  }

  .infobar div {
    display: flex;
    align-items: center;
    gap: 8px;
    white-space: nowrap;
  }

  .infobar b + .bare:last-child {
    margin-left: -6px;
  }

  .infobar b {
    margin-left: 5px;
  }

  .slash {
    margin-left: 10px;
  }

  .toolbar {
    display: flex;
    height: 96px;
    border-top: 2px solid #e4f4fc;
    background: linear-gradient(#9ab9c9, #fff);
  }

  .settings {
    flex: 1;
    display: flex;
    justify-content: space-between;
    align-items: center;
    padding: 0 90px 0 88px;
  }

  .pair {
    display: flex;
    gap: 3px;
  }

  .field {
    height: 41px;
    background: #fff;
    border: 1px solid #72899a;
    border-radius: 7px;
  }

  .spin {
    display: flex;
    width: 165px;
    padding: 5px;
  }

  .spin input {
    flex: 1;
    min-width: 0;
    border: 0;
    padding: 0 3px 0 0;
    text-align: right;
    outline: 0;
    background: none;
  }

  .steps {
    display: grid;
    gap: 1px;
    width: 28px;
  }

  .steps button {
    border: 0;
    padding: 0;
    background: linear-gradient(#c6e4f0, #9dbccb);
  }

  .combo {
    position: relative;
    width: 197px;
    padding: 5px;
  }

  .combo select {
    appearance: none;
    width: 100%;
    height: 100%;
    border: 0;
    padding: 0 32px 0 3px;
    background: none;
    outline: 0;
  }

  .marked select {
    color: #fff;
    padding-left: 1px;
    background: linear-gradient(#2e66c6, #2e66c6) no-repeat 0 0 / calc(100% - 30px) 100%;
  }

  .hour {
    width: 185px;
  }

  .drop {
    position: absolute;
    top: 5px;
    right: 4px;
    bottom: 5px;
    width: 30px;
    display: flex;
    align-items: center;
    justify-content: center;
    background: linear-gradient(#c6e4f0, #94b4c4);
    pointer-events: none;
  }

  .indicator {
    display: flex;
    height: 57px;
    border: 1px solid #72899a;
    border-radius: 7px;
    background: linear-gradient(#fff, #e8e8e8);
  }

  .indicator button {
    background: none;
    border: 0;
    padding: 0 3px;
  }

  .indicator .more {
    width: 29px;
    border-left: 2px solid #72899a;
  }

  .trade {
    display: flex;
    align-items: flex-start;
    width: 836px;
    background: #fff;
  }

  .tool {
    width: 39px;
    height: 41px;
    margin: 26px 6px 0 3px;
    padding: 0;
    border: 1px solid #72899a;
    border-radius: 7px;
    background: linear-gradient(#fff, #ececec);
  }

  .flap {
    background: linear-gradient(#9ab9c9, #fff);
  }

  .order {
    width: 239px;
    margin: 27px 9px 0 0;
  }

  .column {
    display: flex;
    flex-direction: column;
    align-items: center;
    margin-right: 5px;
    line-height: 24px;
    white-space: nowrap;
  }

  .column > :first-child {
    height: 27px;
  }

  .count {
    margin-right: 9px;
  }

  .count input {
    width: 101px;
    text-align: right;
    padding: 0 7px;
  }

  .deal {
    width: 131px;
    height: 57px;
    padding: 0 6px 0 10px;
    align-items: baseline;
    justify-content: flex-start;
    border-radius: 6px;
    color: #fff;
    line-height: 54px;
    text-shadow: -1px -1px 1px rgba(0, 0, 0, .45);
  }

  .deal small {
    font-size: 20px;
  }

  .deal strong {
    font-size: 42px;
    font-weight: normal;
  }

  .deal sup {
    align-self: flex-start;
    font-size: 20px;
    line-height: 36px;
    margin-left: 2px;
  }

  .sell {
    background: linear-gradient(#f05454, #dc4040);
    border: 1px solid #cc3c3c;
  }

  .buy {
    background: linear-gradient(#30c830, #18b018);
    border: 1px solid #18a018;
  }

  .protect {
    display: grid;
    gap: 6px;
    margin-top: 4px;
    padding-left: 11px;
    background: linear-gradient(#6f8fa0, #6f8fa0) no-repeat 0 10px / 2px 65px;
  }

  .protect div {
    display: grid;
    grid-template-columns: 33px 22px 64px;
    align-items: center;
  }

  .protect input[type="checkbox"] {
    appearance: none;
    width: 24px;
    height: 24px;
    border: 1px solid #72899a;
    background: #fff;
  }

  .protect input[type="checkbox"]:checked {
    position: relative;
    border-color: #a4a4a4;
  }

  .protect input[type="checkbox"]:checked::after {
    content: "";
    position: absolute;
    left: 8px;
    top: -2px;
    width: 8px;
    height: 17px;
    border: solid #a0a0a0;
    border-width: 0 3px 3px 0;
    rotate: 38deg;
  }

  .grey {
    color: #aaa;
  }

  .protect .field {
    width: 64px;
    height: 40px;
    padding: 0 7px;
    text-align: right;
  }

  .protect .pale {
    color: #7f95a3;
  }

  main {
    background: #fff;
  }

  .panel {
    display: flex;
    margin-bottom: 4px;
  }

  .tall {
    height: 492px;
  }

  .short {
    height: 312px;
  }

  .panel:last-of-type {
    margin-bottom: 0;
  }

  .plot {
    position: relative;
    flex: 1;
    min-width: 0;
    overflow: hidden;
    border: 1px solid #728a98;
    border-left-color: #c4d0d8;
    border-right-width: 2px;
  }

  .equity {
    background: linear-gradient(#fff, #fbfcff 40%, #eff3fe);
  }

  .positions {
    background: linear-gradient(#f0f4ff, #e8eeff);
  }

  .price {
    background: linear-gradient(#e9eeff, #dae4ff);
  }

  .chart {
    position: relative;
    width: 100%;
    height: 100%;
  }

  .tab {
    position: absolute;
    left: 1px;
    top: 1px;
    display: flex;
    align-items: center;
    gap: 8px;
    height: 34px;
    padding: 0 5px 0 6px;
    font-size: 22px;
    white-space: nowrap;
    background: linear-gradient(#cdebf5, #97b6c6);
    border: solid #72899a;
    border-width: 0 2px 2px 0;
  }

  .tab span {
    margin-right: -3px;
  }

  .axis {
    position: relative;
    width: 100px;
  }

  .tick {
    position: absolute;
    left: 0;
    width: 8px;
    height: 2px;
    background: #72899a;
  }

  .minor {
    width: 4px;
  }

  .value {
    position: absolute;
    left: 13px;
    line-height: 24px;
    margin-top: -11px;
  }

  .bold {
    font-weight: bold;
    font-size: 22px;
  }

  .tag {
    position: absolute;
    left: 8px;
    height: 29px;
    padding: 0 4px;
    line-height: 29px;
    border: 1px solid #72899a;
    background: linear-gradient(#fff, #ccd8f0);
  }

  .wide {
    right: 1px;
    z-index: 1;
  }

  .empty {
    border-color: #999900;
  }

  .chip {
    position: absolute;
    top: 0;
    width: 130px;
    height: 32px;
    padding-right: 6px;
    text-align: right;
    font-size: 22px;
    line-height: 30px;
    color: #000;
    background: #f2e5c2;
    border: 1px solid #f0d9a4;
    border-radius: 0 0 7px 7px;
  }

  .chip.low {
    top: auto;
    bottom: 0;
    border: 1px solid #6495ed;
    border-bottom: 0;
    border-radius: 7px 7px 0 0;
    background: #c6ddff;
    line-height: 34px;
  }

  .note {
    position: absolute;
    font-size: 22px;
    line-height: 26px;
    white-space: nowrap;
  }

  .range {
    left: 302px;
    top: 4px;
  }

  .month {
    right: 0;
    top: 7px;
    color: #7470e8;
  }

  .month.low {
    top: auto;
    bottom: 27px;
  }

  .source {
    left: 4px;
    bottom: -1px;
  }

  .source em {
    margin-left: 4px;
  }

  .timeline {
    padding-right: 100px;
    border-bottom: 2px solid #738a98;
  }

  .days {
    position: relative;
    height: 39px;
  }

  .days span {
    position: absolute;
    width: 40px;
    margin-left: -20px;
    padding-top: 2px;
    line-height: 40px;
    text-align: center;
    background: linear-gradient(#72899a, #72899a) no-repeat 50% 0 / 2px 8px;
  }

  footer {
    display: flex;
    align-items: center;
    gap: 20px;
    height: 60px;
    padding: 1px 13px 0 2px;
    border-top: 2px solid #e4f4fc;
    background: linear-gradient(#accddb, #93b2c0);
  }

  .share {
    gap: 11px;
    width: 111px;
    height: 46px;
    padding: 0;
    border: 1px solid #1a78b8;
    border-radius: 6px;
    color: #fff;
    background: linear-gradient(#2ea0e4, #1482c8);
  }

  .book {
    margin-left: 8px;
  }

  .scroll {
    flex: 1;
    display: flex;
    justify-content: space-between;
    height: 31px;
    margin: 0 -7px 0 -4px;
    border: 2px solid #738f9e;
    border-radius: 6px;
    background: linear-gradient(#9dbccb, #93b3c3);
  }

  .scroll button {
    width: 31px;
    padding: 0;
    border: 2px solid #738f9e;
    border-radius: 6px;
    margin: -2px;
    background: linear-gradient(#cfe6f0, #98b7c6);
  }

  .thumb {
    width: 16px;
    margin: -2px 2px -2px auto;
    border: 2px solid #738f9e;
    border-radius: 6px;
    background: repeating-linear-gradient(transparent 0 3px, #6c8796 3px 5px) no-repeat 0 7px / 100% 14px, #b9d4e0;
  }
</style>
